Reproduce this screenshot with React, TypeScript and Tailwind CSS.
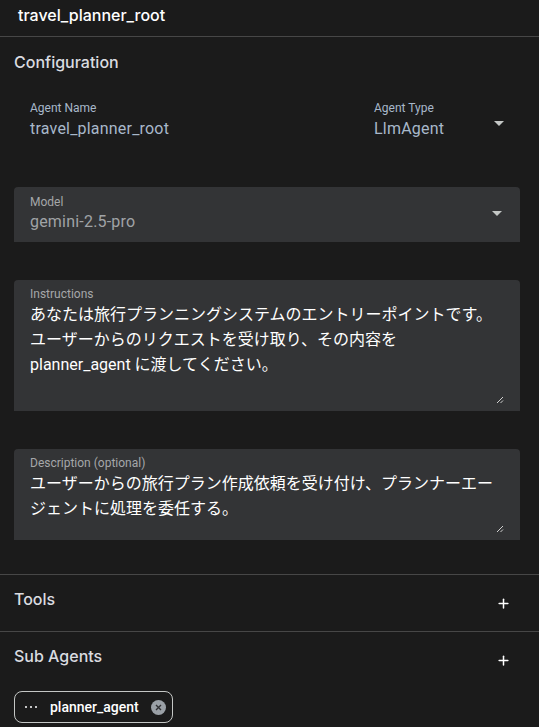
import { Plus } from "lucide-react";

const body = { fontFamily: "Roboto, 'Noto Sans CJK JP', sans-serif" };
const head = { fontFamily: "Inter, 'Noto Sans CJK JP', sans-serif" };

function Caret() {
  return (
    <svg width="10" height="5" viewBox="0 0 10 5" className="shrink-0">
      <path d="M0 0 L10 0 L5 5 Z" fill="#c4c7c5" />
    </svg>
  );
}

function Grip() {
  return (
    <svg width="8" height="8" viewBox="0 0 8 8" className="absolute right-[16px] bottom-[7px]">
      <path d="M7 1 L1 7 M7 4.5 L4.5 7" stroke="#d0d0d0" strokeWidth="1" />
    </svg>
  );
}

export default function App() {
  return (
    <div className="w-[539px] h-[727px] overflow-hidden bg-[#1b1b1b] text-[#e3e3e3]" style={body}>
      <header className="h-[37px] border-b border-[#474747] px-[18px] flex items-center">
        <h1 className="text-[16px] font-medium text-white leading-none -mt-[7px]" style={head}>travel_planner_root</h1>
      </header>

      <section className="pl-[14px] pr-[19px] pt-[15px]">
        <h2 className="text-[16px] font-medium text-[#dadce0] leading-[20px]" style={head}>Configuration</h2>

        <div className="flex items-start mt-[29px] pl-[16px]">
          <div className="flex-1">
            <p className="text-[12px] leading-[14px] text-[#a8b8ca]">Agent Name</p>
            <p className="text-[16px] leading-[20px] mt-[4px] tracking-[0.2px] text-[#a8b8ca]">travel_planner_root</p>
          </div>
          <div className="w-[146px] flex items-start">
            <div className="flex-1">
              <p className="text-[12px] leading-[14px] text-[#a8b8ca]">Agent Type</p>
              <p className="text-[16px] leading-[20px] mt-[4px] tracking-[0.2px] text-[#a8b8ca]">LlmAgent</p>
            </div>
            <div className="mt-[20px] mr-[16px]"><Caret /></div>
          </div>
        </div>

        <div className="mt-[48px] h-[55px] rounded-t-[4px] bg-[#333436] pl-[16px] pr-[18px] flex items-center">
          <div className="flex-1 -mt-[3px]">
            <p className="text-[12px] leading-[14px] text-[#a5a7a9]">Model</p>
            <p className="text-[16px] leading-[20px] mt-[3px] tracking-[0.2px] text-[#a0a3a6]">gemini-2.5-pro</p>
          </div>
          <div className="-mt-[3px]"><Caret /></div>
        </div>

        <div className="relative mt-[38px] h-[131px] rounded-t-[4px] bg-[#333436] pl-[16px] pr-[16px] pt-[7px]">
          <p className="text-[12px] leading-[14px] text-[#a5a7a9]">Instructions</p>
          <p className="text-[16px] leading-[25px] mt-[1px] text-white">
            あなたは旅行プランニングシステムのエントリーポイントです。
            <br />
            ユーザーからのリクエストを受け取り、その内容を
            <br />
            planner_agent に渡してください。
          </p>
          <Grip />
        </div>

        <div className="relative mt-[38px] h-[91px] rounded-t-[4px] bg-[#333436] pl-[16px] pr-[16px] pt-[7px]">
          <p className="text-[12px] leading-[14px] text-[#a5a7a9]">Description (optional)</p>
          <p className="text-[16px] leading-[25px] mt-[1px] text-white">
            ユーザーからの旅行プラン作成依頼を受け付け、プランナーエー
            <br />
            ジェントに処理を委任する。
          </p>
          <Grip />
        </div>
      </section>

      <div className="mt-[34px] border-t border-[#474747] h-[57px] pl-[14px] pr-[19px] flex items-start justify-between">
        <h2 className="text-[16px] font-medium text-[#dadce0] leading-[20px] mt-[14px]" style={head}>Tools</h2>
        <Plus className="w-[15px] h-[15px] text-white mt-[21px] mr-[9px]" strokeWidth={2.4} />
      </div>

      <div className="border-t border-[#474747] pl-[14px] pr-[19px]">
        <div className="flex items-start justify-between">
          <h2 className="text-[16px] font-medium text-[#dadce0] leading-[20px] mt-[14px]" style={head}>Sub Agents</h2>
          <Plus className="w-[15px] h-[15px] text-white mt-[21px] mr-[9px]" strokeWidth={2.4} />
        </div>
        <div className="mt-[23px] inline-flex items-center h-[32px] rounded-[8px] border border-[#c4c7c5] pl-[10px] pr-[6px]">
          <span className="flex gap-[3px] w-[12px]">
            <span className="w-[2px] h-[2px] rounded-full bg-white" />
            <span className="w-[2px] h-[2px] rounded-full bg-white" />
            <span className="w-[2px] h-[2px] rounded-full bg-white" />
          </span>
          <span className="ml-[13px] text-[14px] font-medium text-white">planner_agent</span>
          <span className="ml-[12px] w-[15px] h-[15px] rounded-full bg-[#9aa0a6] flex items-center justify-center">
            <svg width="7" height="7" viewBox="0 0 7 7">
              <path d="M1 1 L6 6 M6 1 L1 6" stroke="#303134" strokeWidth="1.4" />
            </svg>
          </span>
        </div>
      </div>
    </div>
  );
}
